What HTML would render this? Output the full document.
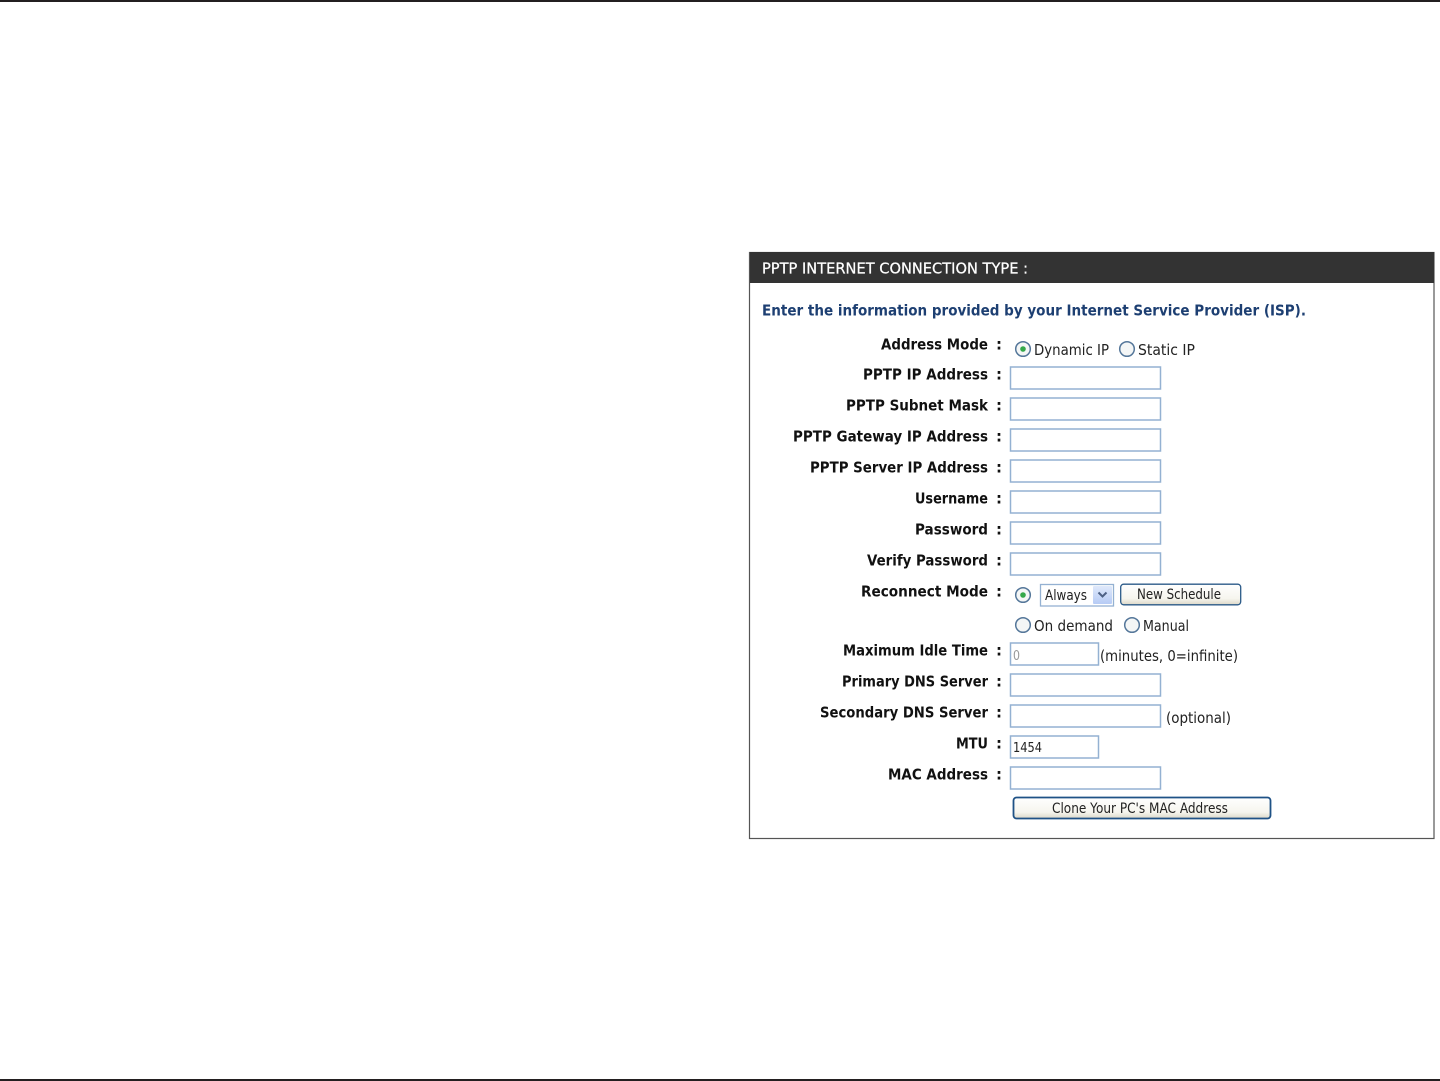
<!DOCTYPE html>
<html lang="en">
<head>
<meta charset="utf-8">
<title>PPTP Internet Connection Type</title>
<style>
html,body{margin:0;padding:0;background:#fff;width:1440px;height:1081px;overflow:hidden}
svg{display:block;filter:blur(.35px)}
text{font-family:"DejaVu Sans","Liberation Sans",sans-serif}
.l{font-size:15px;font-weight:bold;fill:#111}
.t{font-size:15px;fill:#222}
.s{font-size:14px;fill:#222}
.i{fill:#fff;stroke:#94b1d2;stroke-width:1.5}
.r{fill:#f4f6f6;stroke:#55779a;stroke-width:1.5}
</style>
</head>
<body>
<svg width="1440" height="1081" viewBox="0 0 1440 1081" xmlns="http://www.w3.org/2000/svg">
<defs>
<linearGradient id="b" x1="0" y1="0" x2="0" y2="1"><stop offset="0" stop-color="#fff"/><stop offset=".7" stop-color="#f6f5ee"/><stop offset="1" stop-color="#dcd8c8"/></linearGradient>
<linearGradient id="a" x1="0" y1="0" x2="0" y2="1"><stop offset="0" stop-color="#dfe9fb"/><stop offset="1" stop-color="#b6cbf5"/></linearGradient>
</defs>
<rect x="0" y="0" width="1440" height="2" fill="#231f20"/>
<rect x="0" y="1079" width="1440" height="2" fill="#231f20"/>

<rect x="749.5" y="252.5" width="684.5" height="586" fill="#fff" stroke="#555" stroke-width="1.2"/>
<rect x="750" y="252" width="684" height="31" fill="#333"/>
<text x="762" y="273.5" font-size="15" fill="#fff" stroke="#fff" stroke-width=".25" textLength="266" lengthAdjust="spacingAndGlyphs">PPTP INTERNET CONNECTION TYPE :</text>
<text x="762" y="315.5" font-size="15" font-weight="bold" fill="#1d3f72" textLength="544" lengthAdjust="spacingAndGlyphs">Enter the information provided by your Internet Service Provider (ISP).</text>

<g class="labels">
<text class="l" x="881" y="349.6" textLength="107" lengthAdjust="spacingAndGlyphs">Address Mode</text>
<text class="l" x="863" y="379.6" textLength="125" lengthAdjust="spacingAndGlyphs">PPTP IP Address</text>
<text class="l" x="846" y="410.6" textLength="142" lengthAdjust="spacingAndGlyphs">PPTP Subnet Mask</text>
<text class="l" x="793" y="441.6" textLength="195" lengthAdjust="spacingAndGlyphs">PPTP Gateway IP Address</text>
<text class="l" x="810" y="472.6" textLength="178" lengthAdjust="spacingAndGlyphs">PPTP Server IP Address</text>
<text class="l" x="915" y="503.6" textLength="73" lengthAdjust="spacingAndGlyphs">Username</text>
<text class="l" x="915" y="534.6" textLength="73" lengthAdjust="spacingAndGlyphs">Password</text>
<text class="l" x="867" y="565.6" textLength="121" lengthAdjust="spacingAndGlyphs">Verify Password</text>
<text class="l" x="861" y="596.6" textLength="127" lengthAdjust="spacingAndGlyphs">Reconnect Mode</text>
<text class="l" x="843" y="655.6" textLength="145" lengthAdjust="spacingAndGlyphs">Maximum Idle Time</text>
<text class="l" x="842" y="686.6" textLength="146" lengthAdjust="spacingAndGlyphs">Primary DNS Server</text>
<text class="l" x="820" y="717.6" textLength="168" lengthAdjust="spacingAndGlyphs">Secondary DNS Server</text>
<text class="l" x="956" y="748.6" textLength="32" lengthAdjust="spacingAndGlyphs">MTU</text>
<text class="l" x="888" y="779.6" textLength="100" lengthAdjust="spacingAndGlyphs">MAC Address</text>
</g>
<g class="l">
<text x="996" y="349.6">:</text><text x="996" y="379.6">:</text><text x="996" y="410.6">:</text><text x="996" y="441.6">:</text>
<text x="996" y="472.6">:</text><text x="996" y="503.6">:</text><text x="996" y="534.6">:</text><text x="996" y="565.6">:</text>
<text x="996" y="596.6">:</text><text x="996" y="655.6">:</text><text x="996" y="686.6">:</text><text x="996" y="717.6">:</text>
<text x="996" y="748.6">:</text><text x="996" y="779.6">:</text>
</g>

<rect class="i" x="1010.5" y="367" width="150" height="22"/>
<rect class="i" x="1010.5" y="398" width="150" height="22"/>
<rect class="i" x="1010.5" y="429" width="150" height="22"/>
<rect class="i" x="1010.5" y="460" width="150" height="22"/>
<rect class="i" x="1010.5" y="491" width="150" height="22"/>
<rect class="i" x="1010.5" y="522" width="150" height="22"/>
<rect class="i" x="1010.5" y="553" width="150" height="22"/>
<rect class="i" x="1010.5" y="643" width="88" height="22"/>
<rect class="i" x="1010.5" y="674" width="150" height="22"/>
<rect class="i" x="1010.5" y="705" width="150" height="22"/>
<rect class="i" x="1010.5" y="736" width="88" height="22"/>
<rect class="i" x="1010.5" y="767" width="150" height="22"/>

<circle class="r" cx="1023" cy="349" r="7.3"/><circle cx="1023" cy="349" r="2.8" fill="#35a84a"/>
<circle class="r" cx="1127" cy="349" r="7.3"/>
<circle class="r" cx="1023" cy="595" r="7.3"/><circle cx="1023" cy="595" r="2.8" fill="#35a84a"/>
<circle class="r" cx="1023" cy="625" r="7.3"/>
<circle class="r" cx="1132" cy="625" r="7.3"/>

<text class="t" x="1034" y="355" textLength="75" lengthAdjust="spacingAndGlyphs">Dynamic IP</text>
<text class="t" x="1138" y="355" textLength="57" lengthAdjust="spacingAndGlyphs">Static IP</text>
<text class="t" x="1034" y="631" textLength="79" lengthAdjust="spacingAndGlyphs">On demand</text>
<text class="t" x="1143" y="631" textLength="46" lengthAdjust="spacingAndGlyphs">Manual</text>
<text class="t" x="1100" y="661" textLength="138" lengthAdjust="spacingAndGlyphs">(minutes, 0=infinite)</text>
<text class="t" x="1166" y="723" textLength="65" lengthAdjust="spacingAndGlyphs">(optional)</text>
<text x="1013" y="660" font-size="13" fill="#999" textLength="7" lengthAdjust="spacingAndGlyphs">0</text>
<text x="1013" y="752" font-size="13.5" fill="#222" textLength="29" lengthAdjust="spacingAndGlyphs">1454</text>

<rect x="1040.5" y="584.5" width="73" height="21.5" fill="#fff" stroke="#94b1d2" stroke-width="1.3"/>
<text class="s" x="1045" y="600" textLength="42" lengthAdjust="spacingAndGlyphs">Always</text>
<rect x="1093" y="586" width="19" height="18" rx="1" fill="url(#a)"/>
<path d="M1098.5 592.5l4 4 4-4" fill="none" stroke="#4d6185" stroke-width="2"/>

<rect x="1120.7" y="584.2" width="120" height="20.6" rx="3" fill="url(#b)" stroke="#2b5a88" stroke-width="1.3"/>
<text class="s" x="1137" y="599" textLength="84" lengthAdjust="spacingAndGlyphs">New Schedule</text>

<rect x="1013.5" y="797.5" width="257" height="21" rx="3" fill="url(#b)" stroke="#1f5286" stroke-width="1.8"/>
<text class="s" x="1052" y="813" textLength="176" lengthAdjust="spacingAndGlyphs">Clone Your PC's MAC Address</text>
</svg>
</body>
</html>
